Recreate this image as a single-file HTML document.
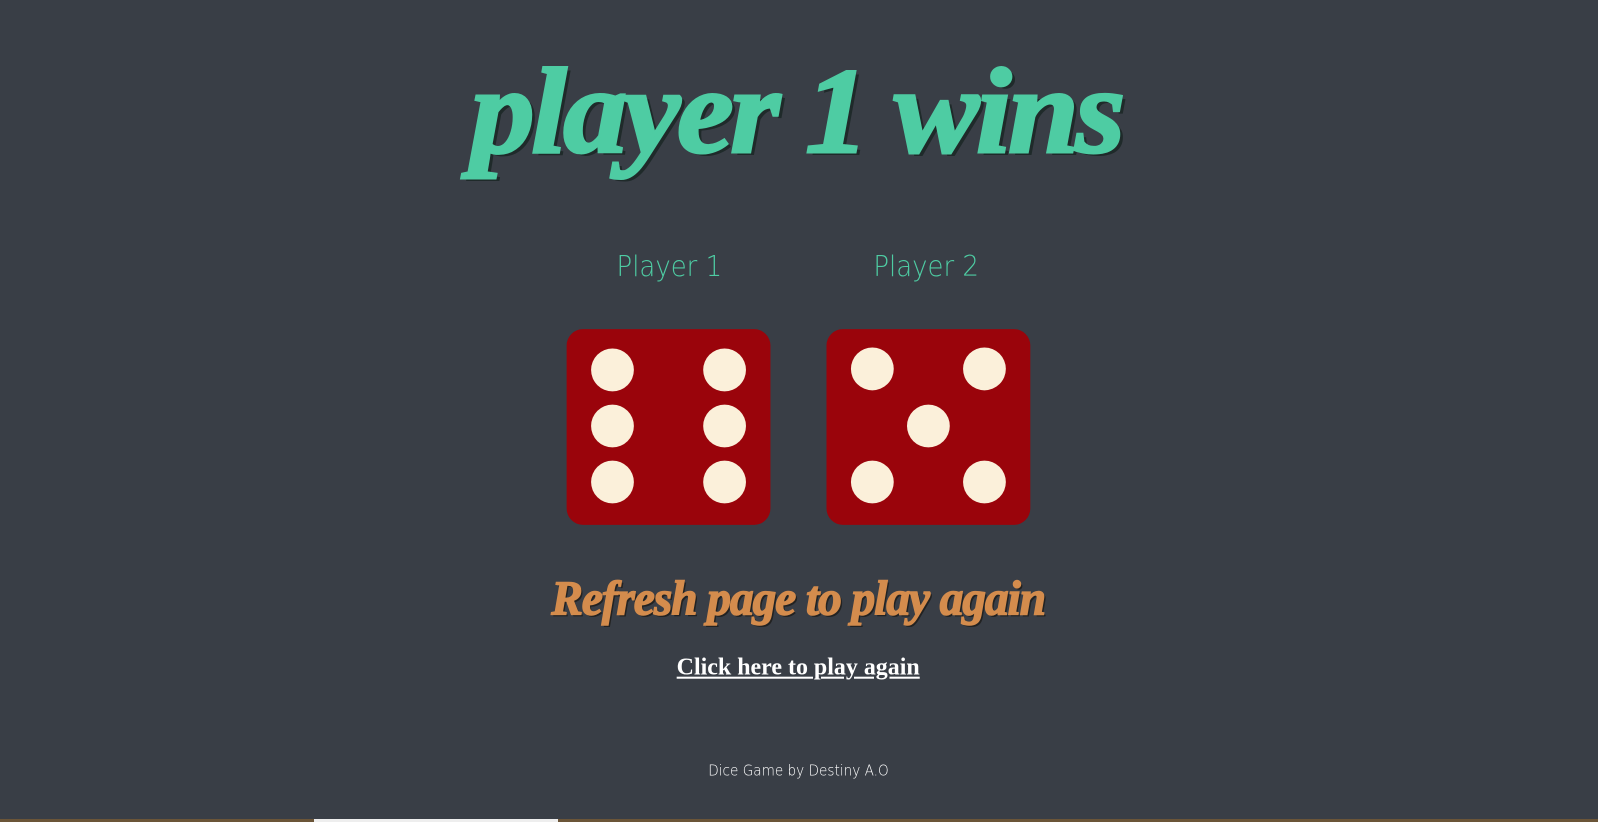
<!DOCTYPE html>
<html><head><meta charset="utf-8"><style>
html,body{margin:0;padding:0;width:1598px;height:822px;overflow:hidden;background:#393E46;}
#wrap{position:absolute;left:0;top:0;width:1568px;height:807px;transform:scale(1.0191);transform-origin:0 0;}
.t{position:absolute;white-space:nowrap;transform-origin:left top;}
.die{position:absolute;width:200px;height:192px;background:#9A040B;border-radius:16px;}
.pip{position:absolute;width:42px;height:42px;border-radius:50%;background:#FBF0DA;}
</style></head><body>
<div id="wrap">
<div class="t" style="left:462px;top:40px;font:italic bold 120px 'Liberation Serif',serif;color:#4ECCA3;-webkit-text-stroke:3px #4ECCA3;text-shadow:4px 3px 0 #1f2a2a;letter-spacing:-3px;transform:scale(1.04,1.0);">player 1 wins</div>
<div class="t" style="left:605px;top:245px;font:200 28px 'DejaVu Sans',sans-serif;color:#4ECCA3;transform:scaleX(0.91)">Player 1</div>
<div class="t" style="left:857px;top:245px;font:200 28px 'DejaVu Sans',sans-serif;color:#4ECCA3;transform:scaleX(0.91)">Player 2</div>
<div class="die" style="left:556px;top:323px">
<div class="pip" style="left:24px;top:19px"></div><div class="pip" style="left:134px;top:19px"></div>
<div class="pip" style="left:24px;top:74px"></div><div class="pip" style="left:134px;top:74px"></div>
<div class="pip" style="left:24px;top:129px"></div><div class="pip" style="left:134px;top:129px"></div>
</div>
<div class="die" style="left:811px;top:323px">
<div class="pip" style="left:24px;top:18px"></div><div class="pip" style="left:134px;top:18px"></div>
<div class="pip" style="left:79px;top:74px"></div>
<div class="pip" style="left:24px;top:129px"></div><div class="pip" style="left:134px;top:129px"></div>
</div>
<div class="t" style="left:541px;top:560px;font:italic bold 48px 'Liberation Serif',serif;color:#D48C4D;-webkit-text-stroke:1.5px #D48C4D;text-shadow:2px 2px 0 #222;letter-spacing:-1px;transform:scaleX(0.965)">Refresh page to play again</div>
<div class="t" style="left:664px;top:642px;font:bold 23.5px 'Liberation Serif',serif;color:#fff;text-decoration:underline;">Click here to play again</div>
<div class="t" style="left:695px;top:747px;font:200 15px 'DejaVu Sans',sans-serif;color:#fff;transform:scaleX(0.89)">Dice Game by Destiny A.O</div>
</div>
<div style="position:absolute;left:0;top:819px;width:1598px;height:3px;background:#6b5538"></div>
<div style="position:absolute;left:314px;top:819px;width:244px;height:3px;background:#eee"></div>
</body></html>
